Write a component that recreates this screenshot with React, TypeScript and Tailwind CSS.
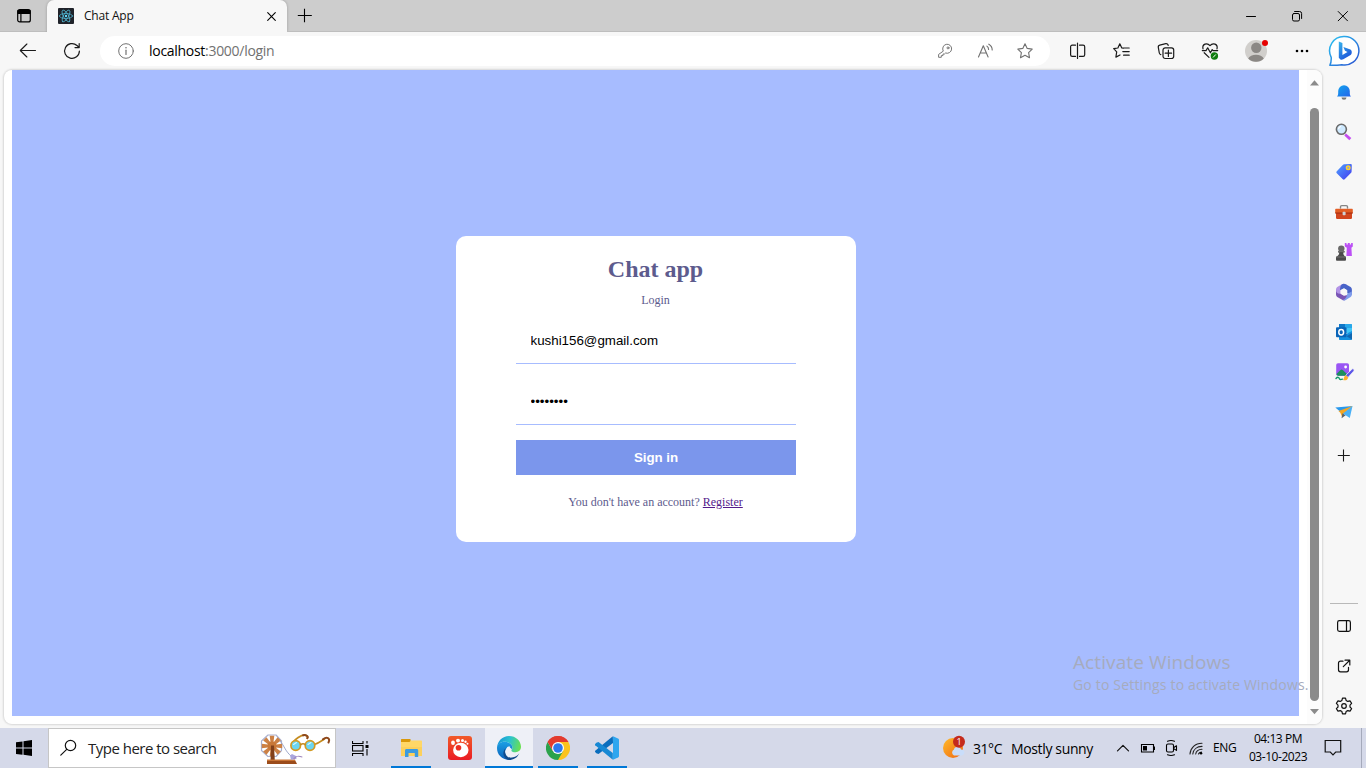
import React from "react";

const seg = "font-['Open_Sans','Noto_Sans',sans-serif]";

type IconProps = {
  w?: number;
  h?: number;
  className?: string;
  color?: string;
  sw?: number;
  children: React.ReactNode;
};

function Icon({ w = 24, h = 24, className = "", color = "#1b1b1b", sw = 1.1, children }: IconProps) {
  return (
    <svg
      width={w}
      height={h}
      viewBox={`0 0 ${w} ${h}`}
      fill="none"
      stroke={color}
      strokeWidth={sw}
      strokeLinecap="round"
      strokeLinejoin="round"
      className={`block shrink-0 ${className}`}
    >
      {children}
    </svg>
  );
}

function ReactLogo() {
  return (
    <Icon w={16} h={16} sw={0.8} color="#4fb3cf">
      <rect width="16" height="16" rx="1" fill="#20232a" stroke="none" />
      <ellipse cx="8" cy="8" rx="6.6" ry="2.5" />
      <ellipse cx="8" cy="8" rx="6.6" ry="2.5" transform="rotate(60 8 8)" />
      <ellipse cx="8" cy="8" rx="6.6" ry="2.5" transform="rotate(120 8 8)" />
      <circle cx="8" cy="8" r="1.2" fill="#61dafb" stroke="none" />
    </Icon>
  );
}

function TitleBar() {
  return (
    <div className="flex h-8 shrink-0 bg-[#cdcdcd]">
      <div className="flex w-[47px] items-center justify-center border-b border-[#bebebe] bg-[#cbcbcb]">
        <Icon w={16} h={16} color="#000" sw={1.2} className="mt-px">
          <rect x="1.7" y="1.7" width="12.6" height="12.2" rx="2" />
          <path d="M2 2.5h12v2.8H2z" fill="#000" />
          <path d="M4.9 5v8.5" />
        </Icon>
      </div>
      <div className="flex w-[240px] items-center rounded-t-[7px] bg-[#f7f7f7] pl-[11px] pr-2 shadow-[0_0_3px_rgba(0,0,0,0.25)]">
        <ReactLogo />
        <span className={`ml-[10px] flex-1 text-[12px] tracking-[-0.2px] text-[#111] ${seg}`}>Chat App</span>
        <Icon w={16} h={16} color="#000" sw={1.1}>
          <path d="M4.7 4.7l7.6 7.6M12.3 4.7l-7.6 7.6" />
        </Icon>
      </div>
      <div className="flex flex-1 items-center justify-between border-b border-[#bebebe] pl-[10px]">
        <Icon w={16} h={16} color="#000" sw={1.1}>
          <path d="M.8 7.5h14M7.5 .7v13.6" strokeLinecap="butt" />
        </Icon>
        <div className="flex">
          <div className="flex w-[46px] items-center justify-center">
            <Icon w={16} h={16} color="#000" sw={1}>
              <path d="M3.5 8.5h9" />
            </Icon>
          </div>
          <div className="flex w-[46px] items-center justify-center">
            <Icon w={16} h={16} color="#000" sw={1}>
              <rect x="3.5" y="5.5" width="7" height="7.5" rx="1.5" />
              <path d="M5.6 3.5h5a2 2 0 0 1 2 2v5" />
            </Icon>
          </div>
          <div className="flex w-[46px] items-center justify-center">
            <Icon w={16} h={16} color="#000" sw={1}>
              <path d="M3.2 3.5l9.3 9.3M12.5 3.5l-9.3 9.3" />
            </Icon>
          </div>
        </div>
      </div>
    </div>
  );
}

const STAR = "M8 .8l2.2 4.6 5 .7-3.6 3.6.9 5L8 12.300l-4.500 2.400.9-5L.8 6.100l5-.7z";

function BingIcon() {
  return (
    <Icon w={32} h={34}>
      <defs>
        <linearGradient id="bg1" x1="0" y1="0" x2="1" y2="1">
          <stop offset="0" stopColor="#2bc5f2" />
          <stop offset="1" stopColor="#2a4fd0" />
        </linearGradient>
        <linearGradient id="bg2" x1="0" y1="0" x2="0.6" y2="1">
          <stop offset="0" stopColor="#38b6ec" />
          <stop offset="1" stopColor="#1c55da" />
        </linearGradient>
      </defs>
      <path
        d="M16.300 2.600a14.200 14.200 0 1 1-2.500 28.100c-3.500.6-8 .6-12 .6 1.600-2.400 1.600-4.200 1.400-8A14.200 14.200 0 0 1 16.300 2.600z"
        fill="#fff"
        stroke="url(#bg1)"
        strokeWidth="1.500"
      />
      <path
        d="M10.800 7.400l3.600 1.500v12l5.100-2.900-2.500-1.200-1.600-3.900 7 2.500c1.700.8 1.900 4.200.2 5.600l-7.300 4.300c-1.400.7-2.300.6-3.100-.1l-1.400-1.500z"
        fill="url(#bg2)"
        stroke="none"
      />
    </Icon>
  );
}

function Toolbar() {
  return (
    <div className="flex h-[38px] shrink-0 items-center bg-[#f7f7f7]">
      <Icon w={18} h={18} color="#1a1a1a" sw={1.1} className="ml-[19px]">
        <path d="M1.500 8.500h15M7.900 2L1.300 8.500l6.600 6.500" />
      </Icon>
      <Icon w={18} h={18} color="#1a1a1a" sw={1.200} className="ml-[26px]">
        <path d="M16.400 9A7.400 7.400 0 1 1 14 3.500L16 5.300M16.200 1.600v4h-4.200" />
      </Icon>
      <div className="ml-[19px] flex h-[30px] w-[950px] items-center rounded-full bg-white pl-[18px] pr-[17px]">
        <Icon w={16} h={16} color="#717171" sw={1}>
          <circle cx="8" cy="8" r="7.300" />
          <path d="M8 7.200v4.300" strokeWidth="1.200" />
          <circle cx="8" cy="4.700" r=".8" fill="#717171" stroke="none" />
        </Icon>
        <span className={`ml-[15px] flex-1 text-[14px] leading-5 tracking-[-0.290px] text-[#717171] ${seg}`}>
          <span className="text-black">localhost</span>:3000/login
        </span>
        <Icon w={16} h={16} color="#777" sw={1} className="mr-6">
          <path d="M6.100 7.800A4.500 4.500 0 1 1 8.600 10L7.500 11H6v1.600H4.300v1.700H1.600v-2.500z" />
          <circle cx="11" cy="4.900" r="1" />
        </Icon>
        <Icon w={16} h={16} color="#717171" sw={1.1} className="mr-6">
          <path d="M1.500 14L6.300 2.800 11.100 14M3.200 10h6.200M9.900 3.100c1.200.8 1.700 2 1.700 3.300M11.800 1.200c2.400 1.300 3.400 3.200 3.400 5.800" />
        </Icon>
        <Icon w={16} h={16} color="#717171" sw={1.1}>
          <path d={STAR} />
        </Icon>
      </div>
      <div className="ml-[6px] flex w-[44px] justify-center">
        <Icon w={18} h={18} color="#1a1a1a" sw={1.200}>
          <path d="M6.500 3.200H3.200a1.600 1.600 0 0 0-1.600 1.600v8a1.600 1.600 0 0 0 1.600 1.600h3.300M10.500 3.200h3.600a1.600 1.600 0 0 1 1.600 1.600v8a1.600 1.600 0 0 1-1.600 1.600h-3.600M8.500 1.200v15.200" />
        </Icon>
      </div>
      <div className="flex w-[44px] justify-center">
        <Icon w={18} h={18} color="#1a1a1a" sw={1.200}>
          <path d="M10.400 6.200L8.800 6 6.800 1.800 4.900 6l-4.200.7 3 3.200-.8 5.200L7 13M10.900 6h5.300M9.800 9.600h6.400M10.600 13.200h5.600" />
        </Icon>
      </div>
      <div className="flex w-[44px] justify-center">
        <Icon w={18} h={18} color="#1a1a1a" sw={1.200}>
          <path d="M3.800 12.600a2 2 0 0 1-1.500-1.600L1.300 5.400a2 2 0 0 1 1.500-2.300l6-1.400a2 2 0 0 1 2.400 1.600" />
          <rect x="6" y="5.800" width="10.700" height="10.700" rx="2.200" />
          <path d="M11.400 8v6.400M8.200 11.200h6.400" />
        </Icon>
      </div>
      <div className="flex w-[44px] justify-center">
        <Icon w={18} h={18} color="#1a1a1a" sw={1.200}>
          <path d="M2 6.800C.9 2.200 6 .1 9 3.600c3-3.500 8.100-1.400 7 3.200M1.300 8.600H5l1.700-2.800 2.700 5 1.800-3.200.9 1h4.600M3.200 10.700L8 15.400" />
          <circle cx="13.400" cy="14" r="3.700" fill="#107c10" stroke="none" />
          <path d="M12.300 15.200l2.200-2.400" stroke="#fff" strokeWidth="1" />
        </Icon>
      </div>
      <div className="flex w-[47px] justify-center">
        <Icon w={24} h={26}>
          <circle cx="12" cy="13" r="11" fill="#d1cfcc" stroke="none" />
          <circle cx="12.300" cy="9.800" r="5.200" fill="#8b8885" stroke="none" />
          <path d="M4.200 20.600c2-5.200 13.600-5.200 15.600 0a11 11 0 0 1-15.600 0z" fill="#8b8885" stroke="none" />
          <circle cx="21" cy="5" r="3" fill="#e60000" stroke="none" />
        </Icon>
      </div>
      <div className="flex w-[44px] justify-center">
        <Icon w={18} h={6}>
          <g fill="#000" stroke="none">
            <circle cx="5" cy="3" r="1.300" />
            <circle cx="10" cy="3" r="1.300" />
            <circle cx="15" cy="3" r="1.300" />
          </g>
        </Icon>
      </div>
      <div className="ml-[5px] flex">
        <BingIcon />
      </div>
    </div>
  );
}

function LoginCard() {
  return (
    <div className="flex h-[306px] w-[400px] flex-col items-center rounded-[10px] bg-white pt-5 font-['Liberation_Serif','Times_New_Roman',serif] text-[#5d5b8d]">
      <h1 className="text-[24px] font-bold leading-[27px]">Chat app</h1>
      <span className="mt-[10px] text-[12px] leading-[14px]">Login</span>
      <form className="mt-[10px] flex w-[280px] flex-col gap-[15px]">
        <input
          type="email"
          defaultValue="kushi156@gmail.com"
          className="h-[47px] border-b border-[#a7bcff] px-[15px] font-['Liberation_Sans',Arial,sans-serif] text-[13.333px] text-black outline-none"
        />
        <input
          type="password"
          defaultValue="password"
          className="h-[46px] border-b border-[#a7bcff] px-[15px] font-['Liberation_Sans',Arial,sans-serif] text-[13.333px] text-black outline-none"
        />
        <button
          type="button"
          className="h-[35px] bg-[#7b96ec] pl-px font-['Liberation_Sans',Arial,sans-serif] text-[13.333px] font-bold tracking-[-0.050px] text-white"
        >
          Sign in
        </button>
      </form>
      <p className="mt-5 text-[12px] leading-[14px]">
        You don't have an account? <a className="text-[#551a8b] underline">Register</a>
      </p>
    </div>
  );
}

function PageView() {
  return (
    <div className="relative ml-1 flex h-[654px] w-[1318px] overflow-hidden rounded-[8px] bg-white pl-2 shadow-[0_0_2px_1px_rgba(0,0,0,0.13)]">
      <div className="flex h-[646px] w-[1287px] justify-center bg-[#a7bcff] pt-[166px]">
        <LoginCard />
      </div>
      <div className="ml-2 flex w-[15px] flex-col items-center bg-[#fcfcfc]">
        <Icon w={9} h={6} className="mt-[10px]">
          <path d="M4.500 .3L9 5.600H0z" fill="#8b8b8b" stroke="none" />
        </Icon>
        <div className="mt-[22px] h-[593px] w-[9px] rounded-full bg-[#8b8b8b]" />
        <Icon w={9} h={6} className="mt-[8px]">
          <path d="M0 0h9L4.500 5.300z" fill="#8b8b8b" stroke="none" />
        </Icon>
      </div>
      <div className={`absolute left-[1069px] top-[579px] whitespace-nowrap text-[#a6abbd] ${seg}`}>
        <div className="text-[19px] leading-[26px] tracking-[0.100px]">Activate Windows</div>
        <div className="text-[14px] leading-[20px] tracking-[0.180px]">Go to Settings to activate Windows.</div>
      </div>
    </div>
  );
}

const sideIcons: React.ReactNode[] = [
  <>
    <path d="M5 16.600c1.400-1.400 1.200-3 1.200-5.600a5.800 5.800 0 0 1 11.600 0c0 2.600-.2 4.200 1.200 5.600z" fill="url(#bellg)" />
    <path d="M9.500 17.600h5a2.500 2.200 0 0 1-5 0z" fill="#777" />
  </>,
  <>
    <path d="M14 13.500l5.300 4.600-2 2.200-5-4.800z" fill="#c44df0" />
    <circle cx="9.400" cy="9.300" r="5" fill="#cfeaff" stroke="#6b6b6b" strokeWidth="1.600" />
    <path d="M6.600 8.700a3 3 0 0 1 2-2.200" stroke="#fff" />
  </>,
  <>
    <path d="M12.200 4.300l6.400-.3c.8 0 1.200.5 1.200 1.200l-.2 6.300c0 .5-.2.900-.5 1.200l-6.400 6.500c-.6.600-1.300.6-1.900 0l-6-6c-.6-.6-.6-1.300 0-1.900L11 4.800c.3-.3.700-.5 1.200-.5z" fill="url(#tagg)" />
    <circle cx="16.200" cy="7.800" r="1.800" fill="#8fa0d8" stroke="#ffd32a" strokeWidth="1.400" />
  </>,
  <>
    <path d="M8.500 8V6.800c0-.8.400-1.200 1.200-1.200h4.600c.8 0 1.200.4 1.200 1.200V8" stroke="#858585" strokeWidth="1.400" />
    <rect x="4" y="10" width="16" height="9" rx="1.200" fill="#d1451e" />
    <path d="M3.200 9.800c0-.6.400-1 1-1h15.600c.6 0 1 .4 1 1v3.200H3.200z" fill="#e35e25" />
    <path d="M3.200 12.500h17.600v1.100H3.200z" fill="#a52e10" />
    <rect x="10.600" y="11.700" width="3" height="3.600" rx=".8" fill="#cfd2d6" />
  </>,
  <>
    <path d="M12.800 3h1.700v1.600h1.300V3h2v1.600h1.300V3h1.700v3.600l-1.400 1.200.5 8.200h-5.500l.4-8.200-2-1.200z" fill="#bc50f5" />
    <circle cx="9.300" cy="8.600" r="3.200" fill="#686868" />
    <path d="M6 11h6.600v1.500h-1.300c0 2 .3 3.100 2.700 4.300v2.700c0 .8-.4 1.300-1.200 1.300H5.200c-.8 0-1.200-.5-1.200-1.300v-2.700c2.500-1.200 3.200-2.300 3.200-4.300H6z" fill="#4b4b4b" />
    <path d="M4.500 17h9M6.500 11.600h5.500" stroke="#858585" strokeWidth=".7" />
  </>,
  <>
    <path d="M4 14.500V9.700c0-1.300.6-2.300 1.700-3L10 4.200c1.200-.7 2.400-.7 3.700 0L15 5l-5 3-1.600 2v4.200z" fill="#b293e6" />
    <path d="M10 4.200c1.200-.7 2.500-.7 3.700 0l4.500 2.600c1.100.7 1.700 1.700 1.700 3v5l-4.600-1.500v-3.100L12 8.200l-4 2c.1-3 .6-5 2-6z" fill="#4964c8" />
    <path d="M4 9.800c0 3 1.200 4.100 4.500 4l3.500 2 7.400-1.600c-.3.600-.7 1.100-1.200 1.400l-4.500 4.200c-1.200.7-2.400.7-3.600 0l-4.400-2.600c-1.100-.7-1.700-1.700-1.700-3z" fill="#7a55b5" />
    <path d="M10.500 20.100c2.300-.6 4-2.200 4.800-6.300l4.600-2.300v2.800c0 1.300-.6 2.300-1.700 3l-4.500 2.600c-1 .6-2.200.7-3.200.2z" fill="#7f9cec" />
    <path d="M12 8.600l3 1.700v3.400l-3 1.700-3-1.700v-3.400z" fill="#f7f7f7" />
  </>,
  <>
    <path d="M8 4h11.500c.3 0 .5.200.5.500V13H7V5c0-.6.4-1 1-1z" fill="#28a8ea" />
    <path d="M7 4h6v5H7z" fill="#0f78c8" />
    <path d="M14 8h6v5h-6z" fill="#50d9ff" opacity=".6" />
    <path d="M7 11l7 3 6-3v8c0 .6-.4 1-1 1H8c-.6 0-1-.4-1-1z" fill="#1490df" />
    <path d="M20 13v6.500l-5.500-3.200z" fill="#1066b0" />
    <rect x="4" y="7.300" width="10.500" height="10" rx="1" fill="#0a64b8" />
    <ellipse cx="9.200" cy="12.300" rx="2.400" ry="2.700" stroke="#fff" strokeWidth="1.500" />
  </>,
  <>
    <rect x="4.200" y="3.300" width="12.800" height="12.400" rx="1.800" fill="#9a55f4" />
    <path d="M4.500 14l4-4c.8-.7 1.500-.7 2.300 0l5.500 5.300c-1 .4-1.500.4-10 .4-1 0-1.700-.6-1.800-1.700z" fill="#1d8f5c" />
    <circle cx="13.600" cy="7" r="1.400" fill="#fff" />
    <path d="M14 15l6.200-6c1-.8 2.500.6 1.700 1.900L16 17.500z" fill="#5b55e8" stroke="#f7f7f7" strokeWidth=".7" />
    <path d="M13.800 15.300l2.400 2.200c-.6 2.700-2.700 3.300-5.200 2.600 1.200-.8.700-3.800 2.800-4.800z" fill="#ffb02e" />
    <path d="M4 18.500c1.800-2 3-1.200 3.300.1.300 1.200 1.700 1 3.200.5" stroke="#159a6a" strokeWidth="1.400" />
  </>,
  <>
    <path d="M3.300 7.500l17.200-1.500L11 14z" fill="#2998ec" />
    <path d="M6.500 11L20.500 6 11 14.500l-.5 3.200-2.200-5z" fill="#f5a623" />
    <path d="M10.500 13.300l3.200 1.900-4.200 3.100z" fill="#59616a" />
    <path d="M11 13.500L20.500 6l-2.700 12z" fill="#49b0f6" />
  </>,
];

function Sidebar() {
  return (
    <div className="flex w-[43px] flex-col items-center pt-[2px]">
      <svg width="0" height="0" className="block">
        <defs>
          <linearGradient id="bellg" x1="0" y1="0" x2="1" y2="1">
            <stop offset="0" stopColor="#12a5ee" />
            <stop offset="1" stopColor="#2563ea" />
          </linearGradient>
          <linearGradient id="tagg" x1="0" y1="0" x2="1" y2="1">
            <stop offset="0" stopColor="#4fa3ff" />
            <stop offset="1" stopColor="#4338ef" />
          </linearGradient>
        </defs>
      </svg>
      {sideIcons.map((g, i) => (
        <div key={i} className="flex h-10 items-center">
          <Icon>
            <g stroke="none">{g}</g>
          </Icon>
        </div>
      ))}
      <div className="flex h-12 items-center">
        <Icon w={16} h={16} color="#1b1b1b" sw={1.100}>
          <path d="M1.800 7.500h12M7.500 1.500v12" strokeLinecap="butt" />
        </Icon>
      </div>
      <div className="mt-[123px] h-px w-7 bg-[#b9b9b9]" />
      <div className="mt-[2px] flex h-10 items-center">
        <Icon w={18} h={18} color="#111" sw={1.200}>
          <rect x="2.600" y="3.600" width="12.800" height="10.800" rx="1.800" />
          <path d="M11.500 3.800v10.400" />
        </Icon>
      </div>
      <div className="flex h-10 items-center">
        <Icon w={18} h={18} color="#111" sw={1.200}>
          <path d="M8 4.200H5.500a2 2 0 0 0-2 2v6.600a2 2 0 0 0 2 2h6a2 2 0 0 0 2-2V10.300M10 3.200h4.800V8M14.500 3.500L8.300 9.700" />
        </Icon>
      </div>
      <div className="flex h-10 items-center">
        <Icon w={18} h={18} color="#111" sw={1.200}>
          <path d="M7.500 1.200h3l.6 2.200 1.700 1 2.200-.6 1.600 2.600L15 8.100v1.900l1.600 1.600-1.600 2.600-2.200-.6-1.700 1-.6 2.200h-3l-.6-2.200-1.700-1-2.200.6-1.600-2.600L3 10V8.100L1.400 6.400 3 3.800l2.200.6 1.700-1z" />
          <circle cx="9" cy="9" r="2.300" />
        </Icon>
      </div>
    </div>
  );
}

function SearchArt() {
  return (
    <Icon w={72} h={34} className="absolute left-[210px] top-[3px]">
      <path d="M9 3h8l5.500 6v9.500L17 24.500H9L2.500 18.500V9z" stroke="#a9b0cf" strokeWidth="1.200" />
      {[0, 45, 90, 135].map((a) => (
        <path
          key={a}
          d="M10.700 3.800h4.600L14 14l1.300 10.200h-4.600L12 14z"
          fill="#cc8145"
          transform={`rotate(${a} 13 14)`}
          stroke="none"
        />
      ))}
      <circle cx="13" cy="14" r="4.600" fill="#c87838" stroke="none" />
      <path d="M12 13.500h3l.8 15h-4.300z" fill="#81401a" stroke="none" />
      <path d="M8 28h28l2 4H8z" fill="#9b4c1b" stroke="none" />
      <path d="M8 27.500h28v1.500H8z" fill="#c97537" stroke="none" />
      <path d="M21 9c4 4 5 10 11 15" stroke="#9ea7ca" strokeWidth="1" />
      <path d="M31 23.500l2-1.500 4 2 .5 3-5.500.8z" fill="#aaa6dc" stroke="none" />
      <path d="M35 26.500c3-4 5-2 8-1.500" stroke="#9d84bc" />
      <g transform="translate(1 0)">
        <path d="M32.500 11C35 7 41 3 45 3.200c2.300.3 3.500 1.800 2.300 3" stroke="#c58b1e" strokeWidth="1.800" />
        <path d="M43 3.300c3-.7 5.500.9 4.300 2.900" stroke="#8e481c" strokeWidth="2" />
        <path d="M55.500 12c3-1 6-3 9-5" stroke="#c58b1e" strokeWidth="1.800" />
        <path d="M63 7.300c4-3 7.500-1 5.500 3.200" stroke="#8e481c" strokeWidth="2" />
        <circle cx="35.700" cy="13.500" r="4.800" fill="#6bd5f1" stroke="#d39a22" strokeWidth="1.700" />
        <circle cx="50" cy="13.500" r="4.800" fill="#6bd5f1" stroke="#d39a22" strokeWidth="1.700" />
        <path d="M40.700 12.500q2.300-1.500 4.600 0" stroke="#c58b1e" strokeWidth="1.700" />
        <path d="M33.500 12.500l3-2M48 12.500l3-2" stroke="#d7f7ff" />
      </g>
    </Icon>
  );
}

function TaskApp({ children, active, running = true }: { children: React.ReactNode; active?: boolean; running?: boolean }) {
  return (
    <div className={`flex h-10 w-12 flex-col items-center ${active ? "bg-[#eef0f7]" : ""}`}>
      <div className="flex h-[38px] items-center pt-[2px]">{children}</div>
      {running && <div className={`h-[2px] bg-[#0078d7] ${active ? "w-12" : "w-10"}`} />}
    </div>
  );
}

function Taskbar() {
  return (
    <div className={`flex h-10 shrink-0 items-center bg-[#d5d9e9] text-black ${seg}`}>
      <div className="flex w-12 justify-center">
        <Icon w={16} h={16}>
          <path d="M0 2.300l6.500-.9v6.200H0zM7.500 1.200L16 0v7.600H7.500zM0 8.600h6.500v6.200L0 13.900zM7.500 8.600H16V16l-8.500-1.200z" fill="#000" stroke="none" />
        </Icon>
      </div>
      <div className="relative flex h-10 w-[288px] items-center border border-[#c6c6c6] bg-white pl-[10px]">
        <Icon w={18} h={18} color="#111" sw={1.200}>
          <circle cx="11.500" cy="6.500" r="5.200" />
          <path d="M7.700 10.300L1.800 16.200" />
        </Icon>
        <span className="ml-[11px] text-[15px] tracking-[-0.510px] text-[#222]">Type here to search</span>
        <SearchArt />
      </div>
      <div className="mr-[3px] flex w-12 justify-center">
        <Icon w={17} h={17} color="#000" sw={1.100}>
          <path d="M.5 1v2.500h10.500V1M.5 16v-2.500h10.500V16M15 1v2.500M15 9v6.500" strokeLinecap="butt" strokeLinejoin="miter" />
          <rect x=".5" y="5.500" width="10.500" height="5.500" strokeLinejoin="miter" />
          <path d="M13.500 5h3v3h-3z" fill="#000" stroke="none" />
        </Icon>
      </div>
      <div className="flex gap-px">
        <TaskApp>
          <Icon w={22} h={20} className="mr-px">
            <g stroke="none">
              <path d="M1 2c0-.6.400-1 1-1h7l2 1.500h10c.6 0 1 .4 1 1V18H1z" fill="#ffd767" />
              <path d="M1 2c0-.6.400-1 1-1h8.500v2L9.500 4H1z" fill="#d9980b" />
              <path d="M1 9h21v9H1z" fill="#fcd05b" />
              <path d="M5 19v-6.500c0-.9.600-1.500 1.500-1.500h10.200c.9 0 1.500.6 1.500 1.500V19h-3.400v-4H8.500v4z" fill="#3b9be0" />
            </g>
          </Icon>
        </TaskApp>
        <TaskApp running={false}>
          <Icon w={24} h={24}>
            <defs>
              <linearGradient id="gom" x1="0" y1="0" x2="0" y2="1">
                <stop offset="0" stopColor="#f15a29" />
                <stop offset="1" stopColor="#ea1c24" />
              </linearGradient>
            </defs>
            <rect width="24" height="24" rx="3" fill="url(#gom)" stroke="none" />
            <g fill="#fff" stroke="none">
              <ellipse cx="12.800" cy="14" rx="7.700" ry="7.200" />
              <ellipse cx="5" cy="6.800" rx="1.900" ry="2.300" />
              <ellipse cx="10" cy="4.600" rx="2" ry="1.900" />
              <circle cx="14.500" cy="4.400" r="1.500" />
              <circle cx="17.500" cy="5.700" r="1.200" />
              <circle cx="19.500" cy="7.700" r="1" />
            </g>
            <circle cx="10.500" cy="11.800" r="2.800" fill="#ed3024" stroke="none" />
          </Icon>
        </TaskApp>
        <TaskApp active>
          <Icon w={24} h={24}>
            <defs>
              <linearGradient id="ed1" x1="0" y1="0.300" x2="1" y2="0.500">
                <stop offset="0" stopColor="#1694d8" />
                <stop offset=".5" stopColor="#2bc2cf" />
                <stop offset="1" stopColor="#69e052" />
              </linearGradient>
              <linearGradient id="ed2" x1="0" y1="0" x2="0" y2="1">
                <stop offset="0" stopColor="#1ba0e4" />
                <stop offset="1" stopColor="#0b5fb9" />
              </linearGradient>
            </defs>
            <g stroke="none">
              <path d="M0 11.500C.5 5 5.500 0 12 0c7 0 12 5 12 10.800 0 3.500-2.500 5.400-5.400 5.400-2.800 0-4.200-.9-4.200-1.800 0-.7 1-1 1-3C15.400 8 11.500 5.800 7.500 5.800 3.500 5.800.5 8.500 0 11.500z" fill="url(#ed1)" />
              <path d="M0 12c0-4 3.500-6.200 7.500-6.200 4 0 7.900 2.200 7.900 5.600 0 1-.3 1.600-.6 2C13.500 10.500 9 11 8.200 15c-.6 3.500 2 7.500 6 8.500C6.500 25 0 19.500 0 12z" fill="url(#ed2)" />
              <path d="M9.300 11.800c-3.500 4 .3 10.800 5.700 9.800 3.200-.5 5.500-2 7.300-4.400-1.800 4.500-6 6.800-10.300 6.800-5.500-1-8-8.500-2.700-12.200z" fill="#114a8b" />
              <path d="M10 11.500c-2 4.500 2.500 8.300 7.500 7.600 2-.3 3.600-1.300 4.900-2.300-1.300.5-2.500.8-4 .8-3.600 0-6-2-6-4 0-1.300.8-2 .8-3-1.500-.4-2.700.1-3.200.9z" fill="#eef0f7" />
            </g>
          </Icon>
        </TaskApp>
        <TaskApp>
          <Icon w={24} h={24}>
            <g stroke="none">
              <path d="M12 12L1.600 6A12 12 0 0 1 22.400 6z" fill="#e33b2e" />
              <path d="M12 12V24A12 12 0 0 0 22.400 6H12z" fill="#fcc31e" />
              <path d="M12 12l5.200 3L12 24A12 12 0 0 1 1.600 6l5.200 9z" fill="#2ba24c" />
              <path d="M12 6h10.400a12 12 0 0 0-20.800 0l5.200 9z" fill="#e33b2e" />
              <circle cx="12" cy="12" r="6" fill="#fff" />
              <circle cx="12" cy="12" r="4.800" fill="#2d78ee" />
            </g>
          </Icon>
        </TaskApp>
        <TaskApp>
          <Icon w={24} h={24}>
            <g stroke="none">
              <path d="M17.800.2L18 7 3.500 18 1.300 17.200.2 16c-.3-.4-.3-.9 0-1.200z" fill="#0a6dbd" />
              <path d="M17.800 23.800V17L3.500 6l-2.200.8L.2 8c-.3.400-.3.900 0 1.200z" fill="#1788d4" />
              <path d="M18 .2l5 2.300c.6.300 1 .8 1 1.500v16c0 .7-.4 1.200-1 1.500l-5 2.300z" fill="#2ea6ef" />
            </g>
          </Icon>
        </TaskApp>
      </div>
      <div className="ml-auto flex items-center">
        <Icon w={24} h={26} className="mr-[7px]">
          <defs>
            <linearGradient id="sun" x1="0" y1="0" x2="1" y2="1">
              <stop offset="0" stopColor="#ffbb2b" />
              <stop offset="1" stopColor="#ef6712" />
            </linearGradient>
          </defs>
          <g stroke="none">
            <circle cx="11" cy="13" r="10" fill="url(#sun)" />
            <path d="M12 20.500a3.300 3.300 0 0 1 0-6c.5-3.500 6-4 7 0 4.500 0 4.500 6 0 6z" fill="#c9ddfa" />
            <circle cx="17" cy="6.700" r="6" fill="#c42b1c" />
          </g>
          <text x="17" y="10" textAnchor="middle" fill="#fff" stroke="none" className="font-['Open_Sans',sans-serif] text-[9px]">
            1
          </text>
        </Icon>
        <span className="w-[38px] whitespace-nowrap text-[14px] tracking-[-0.450px]">31°C</span>
        <span className="w-[105px] whitespace-nowrap text-[14px] tracking-[-0.360px]">Mostly sunny</span>
        <Icon w={14} h={14} color="#111" sw={1.200}>
          <path d="M1.500 9.800L7 4.300l5.500 5.500" />
        </Icon>
        <Icon w={16} h={16} color="#000" sw={1.100} className="ml-[10px]">
          <path d="M1.500 4.500h12v7.500h-12z" strokeLinejoin="miter" />
          <path d="M3 6h4v4.500H3zM14 6.500h1v3.500h-1z" fill="#000" stroke="none" />
        </Icon>
        <Icon w={16} h={18} color="#000" sw={1.100} className="ml-[8px]">
          <rect x="2.500" y="5" width="7" height="8" rx="1.500" />
          <path d="M9.800 8.500L12.500 6.800v4.600L9.800 9.700M3.500 2.200q3.500-1.500 7 0M3.500 15.800q3.500 1.500 7 0" />
        </Icon>
        <Icon w={16} h={16} color="#222" sw={1.100} className="ml-[9px]">
          <path d="M1 14C1.500 8 6 3.300 13 3.300M3.800 14c.4-4.500 4-7.500 9.200-7.600M6.700 14c.4-2.600 2.700-4.600 6.300-4.700M9.500 14c.3-1 1.300-1.900 3-2" />
          <circle cx="12" cy="13.300" r="1.300" fill="#000" stroke="none" />
        </Icon>
        <span className="ml-[8px] w-[36px] text-[12px] tracking-[-0.400px]">ENG</span>
        <div className="flex w-[58px] flex-col items-center whitespace-nowrap text-[12px] leading-[18px] tracking-[-0.450px]">
          <span>04:13 PM</span>
          <span>03-10-2023</span>
        </div>
        <Icon w={18} h={18} color="#111" sw={1.200} className="ml-[17px]">
          <path d="M1.200 1.500h15.500v11.500h-5L9 15.800 6.300 13H1.200z" strokeLinejoin="miter" />
        </Icon>
        <div className="ml-[19px] h-10 w-[5px] border-l border-[#a5aabb]" />
      </div>
    </div>
  );
}

export default function App() {
  return (
    <div className="flex h-[768px] w-[1366px] flex-col overflow-hidden bg-[#f7f7f7]">
      <TitleBar />
      <Toolbar />
      <div className="flex h-[658px] shrink-0">
        <PageView />
        <Sidebar />
      </div>
      <Taskbar />
    </div>
  );
}
